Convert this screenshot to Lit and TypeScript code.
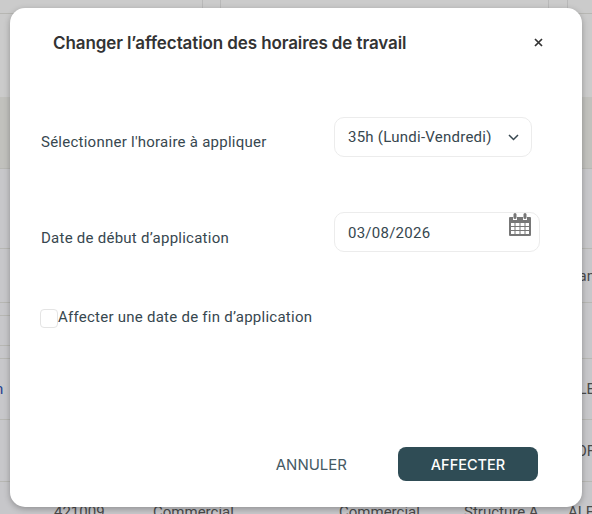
import { LitElement, html, css } from "lit";
import { customElement } from "lit/decorators.js";

@customElement("app-root")
export class AppRoot extends LitElement {
  static styles = css`
    :host { display: block; width: 592px; height: 514px; position: relative; overflow: hidden; background: #c7c7ca; font-family: Roboto, sans-serif; }
    .page { display: flex; flex-direction: column; height: 514px; color: #4a4a4a; font-size: 15px; }
    .r { box-sizing: border-box; border-bottom: 1px solid #b7b7b3; flex: none; display: flex; align-items: center; justify-content: space-between; overflow: hidden; }
    .r0 { height: 14px; background:
      linear-gradient(#b9b9b9,#b9b9b9) 202px 0/1px 100% no-repeat,
      linear-gradient(#b9b9b9,#b9b9b9) 220px 0/1px 100% no-repeat,
      linear-gradient(#b9b9b9,#b9b9b9) 548px 0/1px 100% no-repeat,
      linear-gradient(#b9b9b9,#b9b9b9) 567px 0/1px 100% no-repeat,
      #cbcbcb; }
    .r1 { height: 83px; background: #cbcbcb; border-bottom: 0; }
    .r2 { height: 72px; background: #c1c1bd; }
    .r3 { height: 80px; }
    .r4 { height: 54px; justify-content: flex-end; }
    .r5 { height: 56px; background:
      linear-gradient(#b7b7b3,#b7b7b3) 0 12px/10px 1px no-repeat,
      linear-gradient(#b7b7b3,#b7b7b3) 0 42px/10px 1px no-repeat; }
    .r6 { height: 61px; }
    .r7 { height: 62px; justify-content: flex-end; }
    .r8 { flex: 1; display: grid; grid-template-columns: 54px 99px 186px 125px 104px 24px; align-items: start; padding-top: 21px; line-height: 18px; white-space: nowrap; overflow: hidden; }
    .blue { color: #1f3f8f; margin-left: -5px; }
    .edge { margin-right: -3px; }
    .modal { position: absolute; left: 10px; top: 8px; width: 572px; height: 499px; background: #fff; border-radius: 15px; box-shadow: 0 2px 6px rgba(0,0,0,.28); box-sizing: border-box; padding: 24px 30px 26px 31px; display: flex; flex-direction: column; color: #37474f; font-size: 15px; letter-spacing: .25px; }
    .head { display: flex; justify-content: space-between; align-items: center; padding: 0 9px 0 12px; height: 22px; letter-spacing: 0; }
    h2 { margin: 0; font: 600 17px Inter, sans-serif; color: #333; letter-spacing: -0.1px; }
    .x { width: 9px; height: 9px; color: #333; display: block; margin-top: -2px; }
    .row { display: flex; align-items: center; justify-content: space-between; }
    .one { margin-top: 63px; height: 40px; padding-right: 20px; }
    .two { margin-top: 55px; height: 40px; padding-right: 12px; }
    .two label { padding-top: 12px; }
    .one label { padding-top: 10px; }
    .field { box-sizing: border-box; height: 40px; border: 1px solid #ececec; border-radius: 10px; display: flex; align-items: center; padding-left: 13px; }
    .sel { width: 198px; gap: 16px; }
    .date { width: 206px; justify-content: space-between; padding-right: 8px; }
    .date span { padding-top: 2px; }
    .chev { width: 11px; height: 7px; }
    .cal { width: 22px; height: 24px; position: relative; top: -7px; }
    .check { display: flex; align-items: center; margin-top: 55px; height: 20px; }
    .box { box-sizing: border-box; width: 18px; height: 19px; border: 1px solid #e4e4e4; border-radius: 4px; margin: 3px 0 0 -1px; flex: none; }
    .foot { margin-top: auto; display: flex; justify-content: flex-end; align-items: center; gap: 51px; padding-right: 14px; }
    button { font: 500 14.5px Inter, sans-serif; border: 0; background: none; padding: 0; }
    .cancel { color: #455a64; font-weight: 400; font-size: 15px; }
    .ok { width: 140px; height: 34px; background: #2f4c55; color: #fff; border-radius: 8px; }
  `;

  render() {
    return html`
      <div class="page">
        <div class="r r0"></div>
        <div class="r r1"></div>
        <div class="r r2"></div>
        <div class="r r3"></div>
        <div class="r r4"><span class="edge">an</span></div>
        <div class="r r5"></div>
        <div class="r r6"><span class="blue">n</span><span class="edge">ALE</span></div>
        <div class="r r7"><span class="edge">COF</span></div>
        <div class="r8"><span></span><span>421009</span><span>Commercial</span><span>Commercial</span><span>Structure A</span><span>ALE</span></div>
      </div>
      <div class="modal">
        <div class="head">
          <h2>Changer l’affectation des horaires de travail</h2>
          <svg class="x" viewBox="0 0 9 9"><path d="M1 1l7 7M8 1L1 8" stroke="currentColor" stroke-width="1.7" fill="none"/></svg>
        </div>
        <div class="row one">
          <label>Sélectionner l'horaire à appliquer</label>
          <div class="field sel">35h (Lundi-Vendredi)
            <svg class="chev" viewBox="0 0 11 7"><path d="M1 1l4.5 4.5L10 1" stroke="#37474f" stroke-width="1.5" fill="none"/></svg>
          </div>
        </div>
        <div class="row two">
          <label>Date de début d’application</label>
          <div class="field date"><span>03/08/2026</span>
            <svg class="cal" viewBox="0 0 22 24" fill="#777">
              <path fill-rule="evenodd" d="M1 4h3v3h4V4h6v3h4V4h3a1 1 0 0 1 1 1v17a1 1 0 0 1-1 1H1a1 1 0 0 1-1-1V5a1 1 0 0 1 1-1zM2 10v3h3.5v-3zM6.5 10v3h4v-3zM11.5 10v3h4v-3zM16.5 10v3H20v-3zM2 14v3h3.5v-3zM6.5 14v3h4v-3zM11.5 14v3h4v-3zM16.5 14v3H20v-3zM2 18v3h3.5v-3zM6.5 18v3h4v-3zM11.5 18v3h4v-3zM16.5 18v3H20v-3z"/>
              <rect x="4.5" y="0" width="3" height="6" rx="1.5"/><rect x="14.5" y="0" width="3" height="6" rx="1.5"/>
            </svg>
          </div>
        </div>
        <div class="check"><span class="box"></span>Affecter une date de fin d’application</div>
        <div class="foot">
          <button class="cancel">ANNULER</button>
          <button class="ok">AFFECTER</button>
        </div>
      </div>
    `;
  }
}
